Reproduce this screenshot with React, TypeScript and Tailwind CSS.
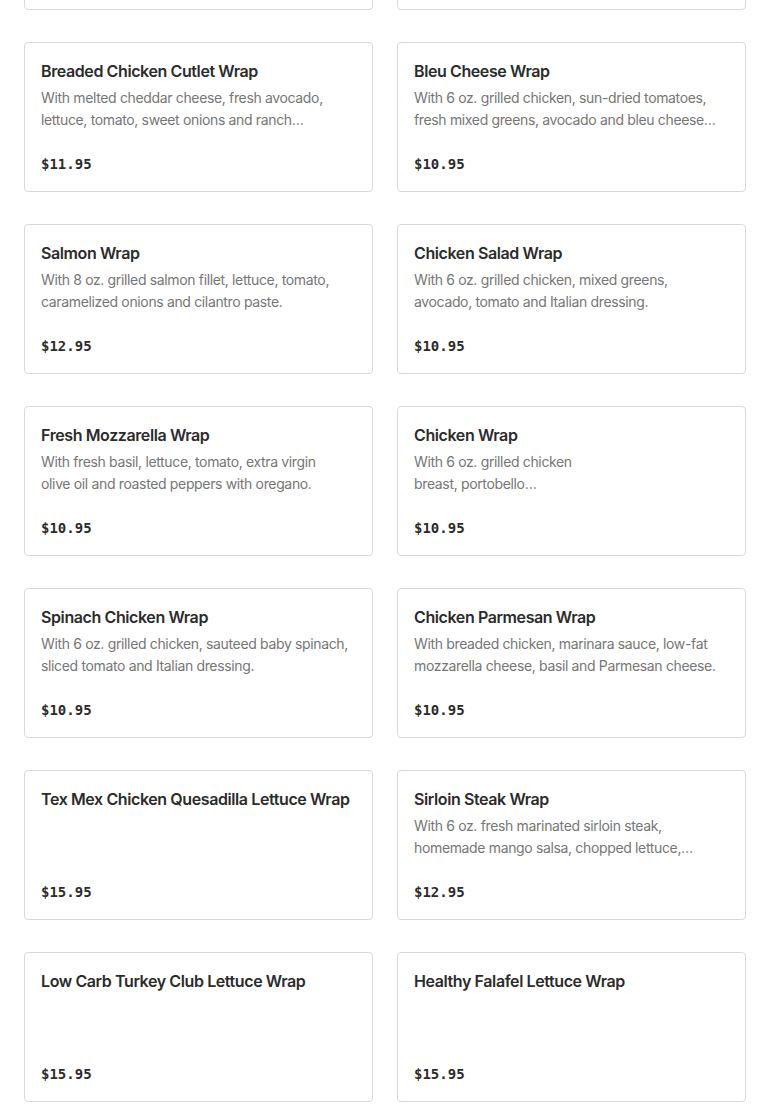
import React from 'react';

type Item = { name: string; desc: string; price: string };

const ITEMS: Item[] = [
  { name: 'Grilled Chicken Caesar Wrap', desc: 'With romaine lettuce, Parmesan cheese and Caesar dressing.', price: '$10.95' },
  { name: 'Turkey Club Wrap', desc: 'With bacon, lettuce, tomato and mayo.', price: '$10.95' },
  { name: 'Breaded Chicken Cutlet Wrap', desc: 'With melted cheddar cheese, fresh avocado, lettuce, tomato, sweet onions and ranch\ndressing.', price: '$11.95' },
  { name: 'Bleu Cheese Wrap', desc: 'With 6 oz. grilled chicken, sun-dried tomatoes, fresh mixed greens, avocado and bleu cheese dressing.', price: '$10.95' },
  { name: 'Salmon Wrap', desc: 'With 8 oz. grilled salmon fillet, lettuce, tomato, caramelized onions and cilantro paste.', price: '$12.95' },
  { name: 'Chicken Salad Wrap', desc: 'With 6 oz. grilled chicken, mixed greens, avocado, tomato and Italian dressing.', price: '$10.95' },
  { name: 'Fresh Mozzarella Wrap', desc: 'With fresh basil, lettuce, tomato, extra virgin\nolive oil and roasted peppers with oregano.', price: '$10.95' },
  { name: 'Chicken Wrap', desc: 'With 6 oz. grilled chicken\nbreast, portobello\nmushrooms, roasted peppers and fresh mozzarella.', price: '$10.95' },
  { name: 'Spinach Chicken Wrap', desc: 'With 6 oz. grilled chicken, sauteed baby spinach, sliced tomato and Italian dressing.', price: '$10.95' },
  { name: 'Chicken Parmesan Wrap', desc: 'With breaded chicken, marinara sauce, low-fat mozzarella cheese, basil and Parmesan cheese.', price: '$10.95' },
  { name: 'Tex Mex Chicken Quesadilla Lettuce Wrap', desc: '', price: '$15.95' },
  { name: 'Sirloin Steak Wrap', desc: 'With 6 oz. fresh marinated sirloin steak, homemade mango salsa, chopped lettuce,\ntomato and onions.', price: '$12.95' },
  { name: 'Low Carb Turkey Club Lettuce Wrap', desc: '', price: '$15.95' },
  { name: 'Healthy Falafel Lettuce Wrap', desc: '', price: '$15.95' },
];

const MenuCard = ({ item }: { item: Item }) => (
  <div className="flex h-[150px] flex-col rounded border border-[#d9d9d9] bg-white px-4 pt-4 pb-[15px]">
    <h3 className="text-[16px] leading-6 font-semibold tracking-tight text-[#2b2b2b] whitespace-nowrap">{item.name}</h3>
    <p className="mt-1 h-11 line-clamp-2 whitespace-pre-line text-[14px] leading-[22px] tracking-tight text-[#767676]">
      {item.desc}
    </p>
    <div className="mt-auto font-['DejaVu_Sans_Mono',monospace] text-[14px] leading-6 font-bold text-[#2b2b2b]">
      {item.price}
    </div>
  </div>
);

export default function App() {
  return (
    <div className="h-[1105px] overflow-hidden bg-white font-['Inter',sans-serif]">
      <div className="-mt-[140px] grid grid-cols-2 gap-x-6 gap-y-8 px-6">
        {ITEMS.map((item) => (
          <MenuCard key={item.name} item={item} />
        ))}
      </div>
    </div>
  );
}
